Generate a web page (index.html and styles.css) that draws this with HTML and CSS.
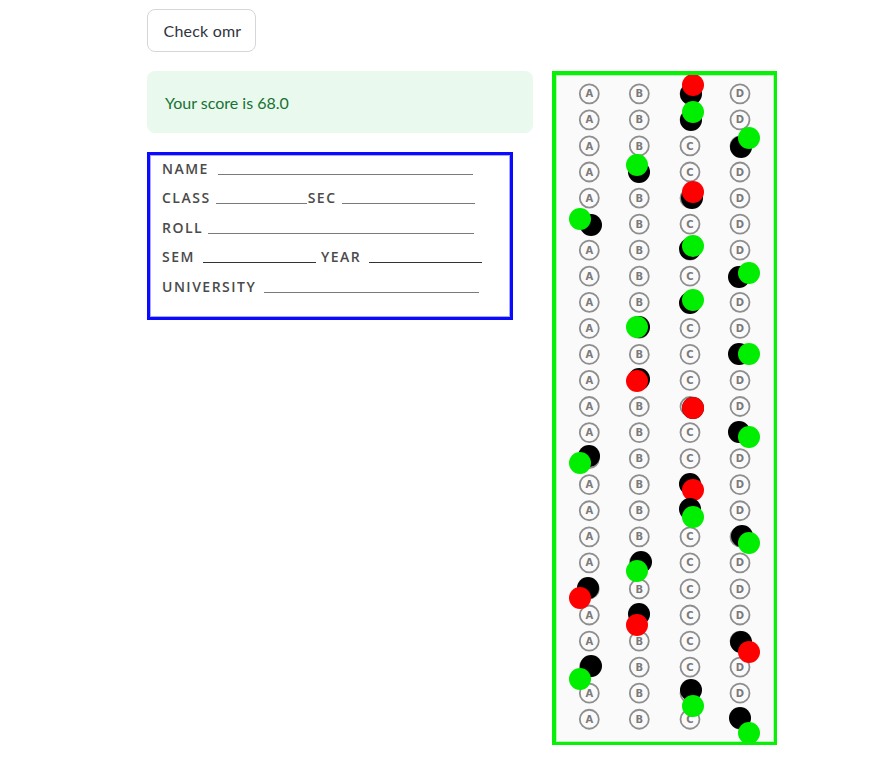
FILE: index.html
```html
<!DOCTYPE html>
<html>
<head>
<meta charset="utf-8">
<link rel="stylesheet" href="styles.css">
</head>
<body>
<div class="page">
  <button class="btn">Check omr</button>
  <div class="cols">
    <div class="col-left">
      <div class="alert">Your score is 68.0</div>
      <div class="form-card">
        <div class="frow"><span class="lbl">NAME</span><span class="ul ml4" style="width:255px"></span></div>
        <div class="frow"><span class="lbl">CLASS</span><span class="ul mr0" style="width:91px"></span><span class="lbl">SEC</span><span class="ul" style="width:133px"></span></div>
        <div class="frow"><span class="lbl">ROLL</span><span class="ul" style="width:266px"></span></div>
        <div class="frow"><span class="lbl">SEM</span><span class="ul dark ml3" style="width:113px"></span><span class="lbl">YEAR</span><span class="ul dark ml3" style="width:113px"></span></div>
        <div class="frow"><span class="lbl">UNIVERSITY</span><span class="ul ml3" style="width:215px"></span></div>
      </div>
    </div>
    <div class="col-right">
      <div class="omr">
        <svg id="sheet" width="218" height="667" viewBox="0 0 218 667" xmlns="http://www.w3.org/2000/svg"></svg>
      </div>
    </div>
  </div>
</div>
<script src="app.js"></script>
</body>
</html>
```
FILE: styles.css
```css
* { box-sizing: border-box; }
html, body { margin: 0; padding: 0; background: #fff; }
body { font-family: "Lato", "Open Sans", sans-serif; color: #31333f; }
.page { padding: 9px 0 0 147px; display: flex; flex-direction: column; align-items: flex-start; gap: 19px; }
.btn {
  width: 109px; height: 43px;
  border: 1px solid #d6d6d9; border-radius: 8px; background: #fff;
  font-family: "Lato", sans-serif; font-size: 16px; color: #31333f;
  padding: 0 0 0 2px; letter-spacing: 0.2px;
}
.cols { display: flex; gap: 19px; align-items: flex-start; }
.col-left { width: 386px; display: flex; flex-direction: column; gap: 19px; }
.alert {
  height: 62px; border-radius: 8px; background: #e9f9ee; color: #177233;
  font-size: 16px; display: flex; align-items: center; padding: 0 18px;
}
.form-card {
  width: 366px; height: 168px;
  border: 3px solid #0a0aff; box-shadow: inset 0 0 0 1px #a8a8ff;
  padding: 4px 0 0 12px;
  display: flex; flex-direction: column; gap: 12px;
  font-family: "Open Sans", sans-serif; font-size: 14px; font-weight: 600; color: #4a4a4a;
}
.frow { display: flex; align-items: flex-end; height: 17.5px; }
.lbl { line-height: 17px; margin-right: 5px; letter-spacing: 1.5px; }
.ul { display: inline-block; height: 1px; border-bottom: 1.5px solid #7a7a7a; margin-right: 5px; margin-bottom: 2px; }
.ul.dark { border-bottom-color: #333; }
.ul.ml4 { margin-left: 4px; }
.ul.ml3 { margin-left: 3px; }
.ul.mr0 { margin-right: 1px; }
.col-right { width: 225px; }
.omr {
  width: 225px; height: 674px;
  border-style: solid; border-color: #08ef08; border-width: 4px 3px 3px 4px;
  background: #fafafa;
  box-shadow: inset 0 0 0 1px #b6f5b6;
}
#sheet { display: block; }
.bub { fill: none; stroke: #8e8e8e; stroke-width: 1.8; }
.let { fill: #7a7a7a; font-family: "DejaVu Sans", sans-serif; font-size: 10px; font-weight: bold; text-anchor: middle; }
```
FILE: app.js
```js
(function () {
  var svg = document.getElementById('sheet');
  var NS = 'http://www.w3.org/2000/svg';
  var ox = 4, oy = 4; // border offset
  var xs = [37.3, 87.3, 138, 188];
  var L = ['A', 'B', 'C', 'D'];
  function el(n, a) { var e = document.createElementNS(NS, n); for (var k in a) e.setAttribute(k, a[k]); svg.appendChild(e); return e; }
  for (var i = 0; i < 25; i++) {
    var y = 22.8 + 26.06 * i - oy;
    for (var j = 0; j < 4; j++) {
      var x = xs[j] - ox;
      el('circle', { cx: x, cy: y, r: 9.5, 'class': 'bub' });
      var t = el('text', { x: x, y: y + 3.6, 'class': 'let' });
      t.textContent = L[j];
    }
  }
  var marks = [
    [139,23,141,14,'r'],[139,49,141,41,'g'],[189,76,197,67,'g'],[87,101,85,94,'g'],
    [140,127,141,121,'r'],[39,154,28,148,'g'],[138,178,141,175,'g'],[187,206,197,202,'g'],
    [138,232,141,229,'g'],[87,256,85,256,'g'],[187,283,197,283,'g'],[87,308,85,310,'r'],
    [141,337,141,337,'r'],[187,361,197,366,'g'],[37,385,28,392,'g'],[138,413,141,419,'r'],
    [138,438,141,446,'g'],[190,465,197,472,'g'],[89,491,85,500,'g'],[36,517,28,527,'r'],
    [87,543,85,554,'r'],[189,571,197,581,'r'],[39,595,28,608,'g'],[139,619,141,635,'g'],
    [188,647,197,662,'g']
  ];
  marks.forEach(function (m) {
    el('circle', { cx: m[0] - ox, cy: m[1] - oy, r: 11, fill: '#000' });
    el('circle', { cx: m[2] - ox, cy: m[3] - oy, r: 11, fill: m[4] === 'r' ? '#ff0000' : '#00ee00' });
  });
})();
```
